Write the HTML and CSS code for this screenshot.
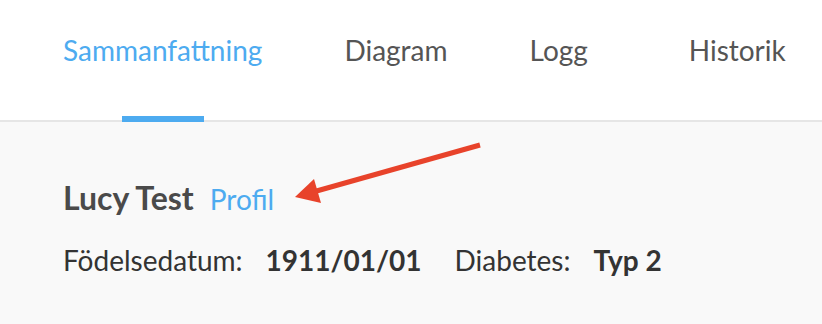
FILE: index.html
```html
<!DOCTYPE html>
<html lang="sv">
<head>
<meta charset="utf-8">
<link rel="stylesheet" href="styles.css">
</head>
<body>
<nav class="tabs">
  <div class="tab active">Sammanfattning</div>
  <div class="tab">Diagram</div>
  <div class="tab">Logg</div>
  <div class="tab tab-last">Historik</div>
</nav>
<main class="content">
  <div class="name-row">
    <span class="name">Lucy Test</span>
    <span class="profile-link">Profil</span>
  </div>
  <div class="info-row">
    <span class="label">Födelsedatum:</span>
    <span class="value">1911/01/01</span>
    <span class="label">Diabetes:</span>
    <span class="value">Typ 2</span>
  </div>
  <svg class="arrow" width="200" height="70" viewBox="0 0 200 70">
    <line x1="185" y1="5" x2="18" y2="52" stroke="#e8432b" stroke-width="5"/>
    <polygon points="0,57 19,39 26,63" fill="#e8432b"/>
  </svg>
</main>
</body>
</html>
```
FILE: styles.css
```css
html, body {
  margin: 0;
  padding: 0;
}
body {
  width: 822px;
  height: 324px;
  background: #f9f9f9;
  font-family: Lato, "Liberation Sans", sans-serif;
  overflow: hidden;
}
.tabs {
  display: flex;
  height: 120px;
  padding-left: 22px;
  background: #ffffff;
  border-bottom: 2px solid #e6e6e6;
}
.tab {
  position: relative;
  flex-shrink: 0;
  padding: 34px 41px 0;
  text-align: center;
  font-size: 28px;
  line-height: 1.2;
  color: #555555;
  white-space: nowrap;
}
.tab-last {
  margin-left: 19px;
}
.tab.active {
  color: #4dabf0;
}
.tab.active::after {
  content: "";
  position: absolute;
  left: 50%;
  bottom: -2px;
  width: 82px;
  height: 6px;
  margin-left: -41px;
  background: #4dabf0;
}
.content {
  position: relative;
  padding: 57px 0 0 63px;
}
.name-row {
  display: flex;
  align-items: baseline;
  gap: 16px;
  line-height: 1.2;
}
.name {
  font-size: 32px;
  font-weight: 700;
  color: #4a4a4a;
}
.profile-link {
  font-size: 28px;
  color: #4dabf0;
}
.info-row {
  display: flex;
  align-items: baseline;
  margin-top: 27px;
  font-size: 28px;
  line-height: 1.2;
  color: #333333;
}
.label + .value {
  margin-left: 23px;
}
.value + .label {
  margin-left: 33px;
}
.value {
  font-weight: 700;
}
.arrow {
  position: absolute;
  left: 295px;
  top: 18px;
}
```
